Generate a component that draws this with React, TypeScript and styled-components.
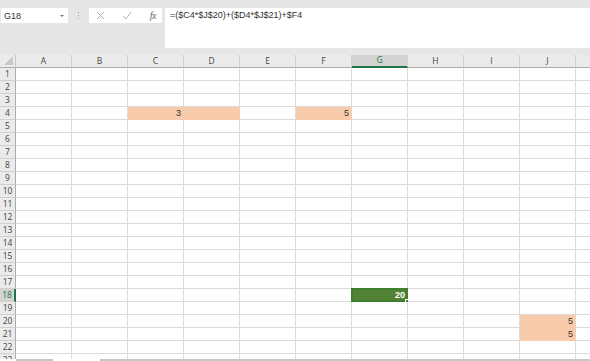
import React from 'react';
import styled, { createGlobalStyle } from 'styled-components';

const GlobalStyle = createGlobalStyle`
  html, body {
    margin: 0;
    padding: 0;
    overflow: hidden;
    background: #fff;
  }
  * {
    box-sizing: border-box;
  }
`;

const COLUMNS = ['A', 'B', 'C', 'D', 'E', 'F', 'G', 'H', 'I', 'J', 'K'];
const ROW_COUNT = 23;
const ACTIVE_COL = 'G';
const ACTIVE_ROW = 18;

const values: Record<string, string> = {
  C4: '3',
  F4: '5',
  G18: '20',
  J20: '5',
  J21: '5',
};

const peach = ['C4', 'D4', 'F4', 'J20', 'J21'];

const Page = styled.div`
  width: 590px;
  height: 361px;
  display: flex;
  flex-direction: column;
  background: #e6e6e6;
  font-family: 'Liberation Sans', Arial, sans-serif;
  overflow: hidden;
`;

const TopBar = styled.div`
  display: flex;
  align-items: flex-start;
  height: 48px;
  padding: 8px 0 0 1px;
`;

const NameBox = styled.div`
  width: 67px;
  height: 15px;
  background: #fff;
  display: flex;
  align-items: center;
  justify-content: space-between;
  padding: 0 4px 0 3px;
  font-size: 9px;
  color: #333;
`;

const DropArrow = styled.span`
  width: 0;
  height: 0;
  border-left: 2px solid transparent;
  border-right: 2px solid transparent;
  border-top: 2px solid #777;
`;

const Dots = styled.div`
  width: 21px;
  height: 15px;
  display: flex;
  flex-direction: column;
  align-items: center;
  justify-content: center;
  gap: 2px;

  span {
    width: 1px;
    height: 1px;
    background: #a6a6a6;
  }
`;

const ActionBox = styled.div`
  width: 73px;
  height: 15px;
  background: #fff;
  display: flex;
  align-items: center;
  justify-content: space-between;
  padding: 0 6px 0 7px;
`;

const FxText = styled.span`
  font-family: 'Liberation Serif', 'Times New Roman', serif;
  font-style: italic;
  font-size: 10px;
  color: #666;
  letter-spacing: -0.5px;
`;

const FormulaBox = styled.div`
  flex: 1;
  height: 40px;
  margin-left: 3px;
  background: #fff;
  padding: 2px 0 0 5px;
  font-size: 9px;
  color: #333;
`;

const Spacer = styled.div`
  height: 7px;
`;

const Sheet = styled.div`
  flex: 1;
  display: grid;
  grid-template-columns: 16px repeat(11, 56px);
  grid-auto-rows: 13px;
  background: #fff;
  overflow: hidden;
`;

const Corner = styled.div`
  background: #ebebeb;
  border-right: 1px solid #c6c6c6;
  border-bottom: 1px solid #ababab;
  display: flex;
  align-items: flex-end;
  justify-content: flex-end;
  padding: 0 2px 2px 0;

  span {
    width: 0;
    height: 0;
    border-left: 9px solid transparent;
    border-bottom: 9px solid #c8c8c8;
  }
`;

const ColHeader = styled.div<{ $active?: boolean }>`
  background: ${(p) => (p.$active ? '#d3d3d3' : '#ebebeb')};
  border-right: 1px solid #d0d0d0;
  border-bottom: ${(p) => (p.$active ? '2px solid #217346' : '1px solid #ababab')};
  display: flex;
  align-items: center;
  justify-content: center;
  font-family: 'Open Sans', 'Noto Sans', sans-serif;
  font-size: 8.5px;
  color: ${(p) => (p.$active ? '#217346' : '#444')};
  line-height: 1;
`;

const RowHeader = styled.div<{ $active?: boolean }>`
  background: ${(p) => (p.$active ? '#d3d3d3' : '#ebebeb')};
  border-right: ${(p) => (p.$active ? '2px solid #217346' : '1px solid #ababab')};
  border-bottom: 1px solid #d0d0d0;
  display: flex;
  align-items: center;
  justify-content: center;
  font-family: 'Open Sans', 'Noto Sans', sans-serif;
  font-size: 8.5px;
  color: ${(p) => (p.$active ? '#217346' : '#444')};
  line-height: 1;
`;

const Cell = styled.div<{ $fill?: string; $bold?: boolean; $light?: boolean }>`
  position: relative;
  background: ${(p) => p.$fill || '#fff'};
  border-right: 1px solid ${(p) => p.$fill || '#dcdcdc'};
  border-bottom: 1px solid ${(p) => p.$fill || '#dcdcdc'};
  display: flex;
  align-items: center;
  justify-content: flex-end;
  padding-right: 2px;
  font-family: 'Liberation Sans', Arial, sans-serif;
  font-size: 9px;
  font-weight: ${(p) => (p.$bold ? 700 : 400)};
  color: ${(p) => (p.$light ? '#fff' : '#333')};
  line-height: 1;
`;

const Selection = styled.span`
  position: absolute;
  left: -1px;
  top: -1px;
  right: -1px;
  bottom: -1px;
  border: 2px solid #3f7d2f;
  pointer-events: none;
`;

const Handle = styled.span`
  position: absolute;
  right: -3px;
  bottom: -3px;
  width: 5px;
  height: 5px;
  background: #3f7d2f;
  border: 1px solid #fff;
`;

const BottomStrip = styled.div`
  height: 2px;
  display: flex;
  background: #fff;
`;

const StripPart = styled.div<{ $width?: number; $grow?: boolean; $shade?: boolean }>`
  width: ${(p) => (p.$width ? `${p.$width}px` : 'auto')};
  flex: ${(p) => (p.$grow ? 1 : 'none')};
  background: ${(p) => (p.$shade ? '#c6c6c6' : '#fff')};
`;

const CancelIcon = () => (
  <svg width="9" height="9" viewBox="0 0 9 9">
    <path d="M1 1 L8 8 M8 1 L1 8" stroke="#b4b4b4" strokeWidth="1" fill="none" />
  </svg>
);

const CheckIcon = () => (
  <svg width="10" height="9" viewBox="0 0 10 9">
    <path d="M1 5 L4 8 L9 1" stroke="#b4b4b4" strokeWidth="1" fill="none" />
  </svg>
);

export default function App() {
  const rows = Array.from({ length: ROW_COUNT }, (_, i) => i + 1);

  return (
    <>
      <GlobalStyle />
      <Page>
        <TopBar>
          <NameBox>
            <span>G18</span>
            <DropArrow />
          </NameBox>
          <Dots>
            <span />
            <span />
            <span />
          </Dots>
          <ActionBox>
            <CancelIcon />
            <CheckIcon />
            <FxText>fx</FxText>
          </ActionBox>
          <FormulaBox>=($C4*$J$20)+($D4*$J$21)+$F4</FormulaBox>
        </TopBar>
        <Spacer />
        <Sheet>
          <Corner>
            <span />
          </Corner>
          {COLUMNS.map((c) => (
            <ColHeader key={c} $active={c === ACTIVE_COL}>
              {c}
            </ColHeader>
          ))}
          {rows.map((r) => (
            <React.Fragment key={r}>
              <RowHeader $active={r === ACTIVE_ROW}>{r}</RowHeader>
              {COLUMNS.map((c) => {
                const id = `${c}${r}`;
                const active = id === `${ACTIVE_COL}${ACTIVE_ROW}`;
                const fill = active ? '#548235' : peach.includes(id) ? '#f8cbad' : undefined;
                return (
                  <Cell key={id} $fill={fill} $bold={active} $light={active}>
                    {values[id]}
                    {active && (
                      <>
                        <Selection />
                        <Handle />
                      </>
                    )}
                  </Cell>
                );
              })}
            </React.Fragment>
          ))}
        </Sheet>
        <BottomStrip>
          <StripPart $width={16} />
          <StripPart $width={37} $shade />
          <StripPart $width={47} />
          <StripPart $grow $shade />
        </BottomStrip>
      </Page>
    </>
  );
}
